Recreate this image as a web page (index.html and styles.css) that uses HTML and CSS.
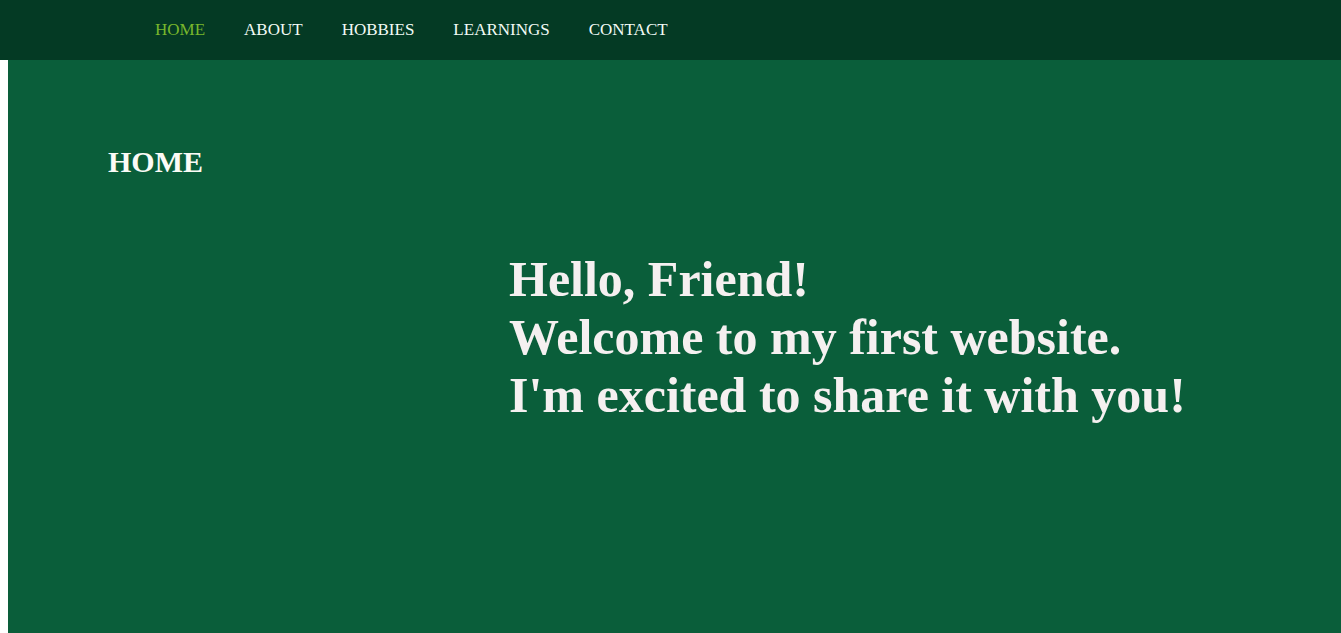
FILE: index.html
```html
<!DOCTYPE html>
<html lang="en">
<head>
<meta charset="utf-8">
<title>My First Website</title>
<link rel="stylesheet" href="styles.css">
</head>
<body>
<header class="topbar">
  <nav class="menu">
    <a class="menu-link active" href="#home">HOME</a>
    <a class="menu-link" href="#about">ABOUT</a>
    <a class="menu-link" href="#hobbies">HOBBIES</a>
    <a class="menu-link" href="#learnings">LEARNINGS</a>
    <a class="menu-link" href="#contact">CONTACT</a>
  </nav>
</header>
<main class="home" id="home">
  <h2 class="section-title">HOME</h2>
  <div class="greeting">
    <p class="greeting-line">Hello, Friend!</p>
    <p class="greeting-line">Welcome to my first website.</p>
    <p class="greeting-line">I'm excited to share it with you!</p>
  </div>
</main>
</body>
</html>
```
FILE: styles.css
```css
html, body {
  margin: 0;
  padding: 0;
  height: 100%;
}

body {
  font-family: "Liberation Serif", "Times New Roman", serif;
  background: #ffffff;
  display: flex;
  flex-direction: column;
  overflow: hidden;
}

.topbar {
  height: 60px;
  background: #043a24;
  display: flex;
  align-items: center;
  flex-shrink: 0;
}

.menu {
  display: flex;
  gap: 39px;
  padding-left: 155px;
}

.menu-link {
  font-size: 17px;
  color: #f2fbf6;
  text-decoration: none;
}

.menu-link.active {
  color: #78b72c;
}

.home {
  flex: 1;
  margin-left: 8px;
  background: #0a5e3a;
  padding: 85px 0 0 100px;
}

.section-title {
  margin: 0;
  font-size: 30px;
  line-height: 34px;
  font-weight: bold;
  color: #fbfbf6;
}

.greeting {
  margin-top: 71px;
  padding-left: 401px;
}

.greeting-line {
  margin: 0;
  font-size: 50px;
  font-weight: bold;
  line-height: normal;
  color: #f5f0f0;
}
```
